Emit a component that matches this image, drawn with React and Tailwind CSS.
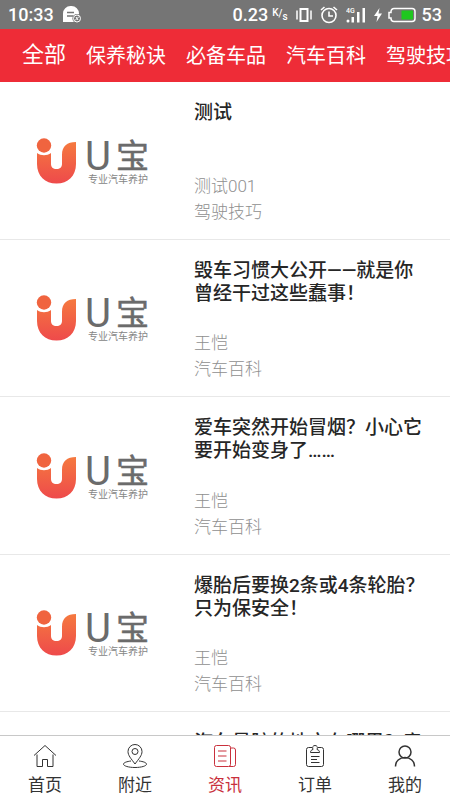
import React from "react";

const tabs = ["保养秘诀", "必备车品", "汽车百科", "驾驶技巧"];

const articles = [
  { title: "测试", author: "测试001", category: "驾驶技巧" },
  { title: "毁车习惯大公开——就是你曾经干过这些蠢事！", author: "王恺", category: "汽车百科" },
  { title: "爱车突然开始冒烟？小心它要开始变身了……", author: "王恺", category: "汽车百科" },
  { title: "爆胎后要换2条或4条轮胎？只为保安全！", author: "王恺", category: "汽车百科" },
  { title: "汽车最脏的地方在哪里？竟然不是脚垫！", author: "王恺", category: "汽车百科" },
];

function StatusBar() {
  return (
    <div className="flex h-[29px] shrink-0 items-center bg-[#757575] pr-2 pl-2 text-lg font-medium text-white">
      <span>10:33</span>
      <svg className="ml-2 h-5 w-5" viewBox="0 0 20 20" fill="none">
        <path d="M1 17V8.500a7.500 7.500 0 0 1 7.500-7.500h1A7.500 7.500 0 0 1 17 8.500V17z" fill="#fff" />
        <path d="M5 7.500h7M5 11h6" stroke="#757575" strokeWidth="1.600" />
        <circle cx="15" cy="13.500" r="4.600" fill="#757575" />
        <circle cx="15" cy="13.500" r="3.500" stroke="#fff" />
        <path d="M13 15.500l4-4M14 12l2 3" stroke="#fff" />
      </svg>
      <span className="ml-auto">0.23</span>
      <span className="ml-1 flex text-[10px] leading-3">
        <span className="pb-1">K</span>
        <span className="pt-px">/</span>
        <span className="pt-1">s</span>
      </span>
      <svg className="ml-2 h-4 w-4" viewBox="0 0 16 16" fill="none" stroke="#fff">
        <rect x="4.500" y="2" width="7" height="12" strokeWidth="2" />
        <path d="M1 3.500v9M15 3.500v9" strokeWidth="1.500" />
      </svg>
      <svg className="ml-2 h-[18px] w-[18px]" viewBox="0 0 18 18" fill="none" stroke="#fff" strokeWidth="1.600">
        <circle cx="9" cy="9.500" r="7" />
        <path d="M9 5.500v4.500h4M1 4l3.500-3M17 4l-3.500-3" />
      </svg>
      <svg className="ml-2 h-[18px] w-5" viewBox="0 0 20 18" fill="#fff">
        <text x="0" y="7" fontSize="7">4G</text>
        <circle cx="2" cy="15" r="1.500" />
        <path d="M5.500 11h2.500v5.500h-2.500zM11 6h2.500v10.500h-2.500zM16.500 2h2.500v14.500h-2.500z" />
      </svg>
      <svg className="ml-2 h-[14px] w-2" viewBox="0 0 8 14" fill="#fff">
        <path d="M5.500 0L0 8h3.500L2.500 14L8 5.500H4.500z" />
      </svg>
      <svg className="ml-1.5 h-4 w-7" viewBox="0 0 28 16" fill="none">
        <path d="M6 1.500h18a3 3 0 0 1 3 3v7a3 3 0 0 1-3 3H6a3 3 0 0 1-3-3V11H1V5.500h2V4.500a3 3 0 0 1 3-3z" stroke="#fff" strokeWidth="1.500" />
        <rect x="13.500" y="3.500" width="11.500" height="9" fill="#1fc71f" />
      </svg>
      <span className="ml-1.5">53</span>
    </div>
  );
}

function Logo() {
  return (
    <svg className="h-12 w-28 overflow-visible" viewBox="0 0 112 48" role="img" aria-label="U宝 专业汽车养护">
      <defs>
        <linearGradient id="mark" x1="0" y1="0" x2="0" y2="1">
          <stop offset="0" stopColor="#f5793f" />
          <stop offset="1" stopColor="#ee4a4b" />
        </linearGradient>
      </defs>
      <circle cx="8" cy="8.500" r="7.200" fill="#f0643f" />
      <path
        d="M1 16c4 3 10 3 14 0v11c0 3 2 5 5.500 5s5.500-2 5.500-5V18C26 9 31 5 40 5v22c0 12-8 19.500-19.500 19.500S1 39 1 27z"
        fill="url(#mark)"
      />
      <text x="49" y="33" fontSize="40" fill="#6b6b6b">U</text>
      <text x="80" y="31" fontSize="33" fill="#6b6b6b" stroke="#6b6b6b" strokeWidth="0.500">宝</text>
      <text x="52" y="46" fontSize="10" fill="#858585">专业汽车养护</text>
    </svg>
  );
}

function Article({ title, author, category }) {
  return (
    <li className="flex h-[158px] shrink-0 border-b border-[#e8e8e8] even:h-[157px]">
      <div className="flex w-[184px] shrink-0 items-center justify-center">
        <Logo />
      </div>
      <div className="flex flex-1 flex-col justify-between pt-[19px] pr-6 pb-[14px] pl-[10px]">
        <h2 className="text-[19px] leading-[23px] font-medium text-[#262626]">{title}</h2>
        <div className="text-[17px] leading-[26px] font-light text-[#8f8f8f]">
          <p>{author}</p>
          <p>{category}</p>
        </div>
      </div>
    </li>
  );
}

const navItems = [
  {
    label: "首页",
    icon: <path d="M1 11.500L12 1.500L23 11.500M4 10.500V22.500H9.500V15.500H14.500V22.500H20V10.500" />,
  },
  {
    label: "附近",
    icon: (
      <>
        <path d="M12 20C8 14.500 5 11.500 5 7.500a7 7 0 0 1 14 0c0 4-3 7-7 12.500z" />
        <circle cx="12" cy="7.500" r="3" />
        <path d="M8 17c-4 .5-7.500 1.500-7.500 3.200s5 3.300 11.500 3.300s11.500-1.600 11.500-3.300s-3.500-2.700-7.500-3.200" />
      </>
    ),
  },
  {
    label: "资讯",
    active: true,
    icon: (
      <>
        <rect x="1.500" y="1.500" width="16" height="21" rx="2" />
        <path d="M5 7h8.500M5 12h8.500M5 17h8.500M17.500 4h3a2 2 0 0 1 2 2v14.500a2 2 0 0 1-2 2H16" />
      </>
    ),
  },
  {
    label: "订单",
    icon: (
      <>
        <path d="M9 3.500H5.500a2 2 0 0 0-2 2v15a2 2 0 0 0 2 2h13a2 2 0 0 0 2-2v-15a2 2 0 0 0-2-2H15" />
        <path d="M7.500 8.500c0-2 1-2.500 2.500-3C9 3 10 1.500 12 1.500s3 1.500 2 4c1.500.5 2.500 1 2.500 3zM8 12.500h8.500M8 15.500h6M8 18.500h8.500" />
      </>
    ),
  },
  {
    label: "我的",
    icon: (
      <g strokeWidth="1.500">
        <circle cx="12" cy="8" r="6" />
        <path d="M2.500 22.500c0-5.500 4-9 9.500-9s9.500 3.500 9.500 9" />
      </g>
    ),
  },
];

export default function App() {
  return (
    <div className="flex h-screen flex-col overflow-hidden bg-white font-['Roboto','Noto_Sans_CJK_SC',sans-serif]">
      <StatusBar />
      <nav className="flex h-[53px] shrink-0 items-center gap-5 overflow-hidden bg-[#ee2c37] pl-[22px] text-xl whitespace-nowrap text-white">
        <button className="shrink-0 text-[22px]">全部</button>
        {tabs.map((tab) => (
          <button key={tab} className="shrink-0">{tab}</button>
        ))}
      </nav>
      <main className="min-h-0 flex-1 overflow-y-auto [scrollbar-width:none]">
        <ul className="flex flex-col">
          {articles.map((article) => (
            <Article key={article.title} {...article} />
          ))}
        </ul>
      </main>
      <nav className="grid h-[65px] shrink-0 grid-cols-5 border-t border-[#c8c8c8] bg-white">
        {navItems.map(({ label, icon, active }) => (
          <a
            key={label}
            href="#"
            className={`flex flex-col items-center gap-1 pt-2 text-[17px] leading-[26px] ${active ? "text-[#c9303c]" : "text-[#333]"}`}
          >
            <svg className="h-6 w-6" viewBox="0 0 24 24" fill="none" stroke="currentColor" strokeWidth="1">
              {icon}
            </svg>
            {label}
          </a>
        ))}
      </nav>
    </div>
  );
}
